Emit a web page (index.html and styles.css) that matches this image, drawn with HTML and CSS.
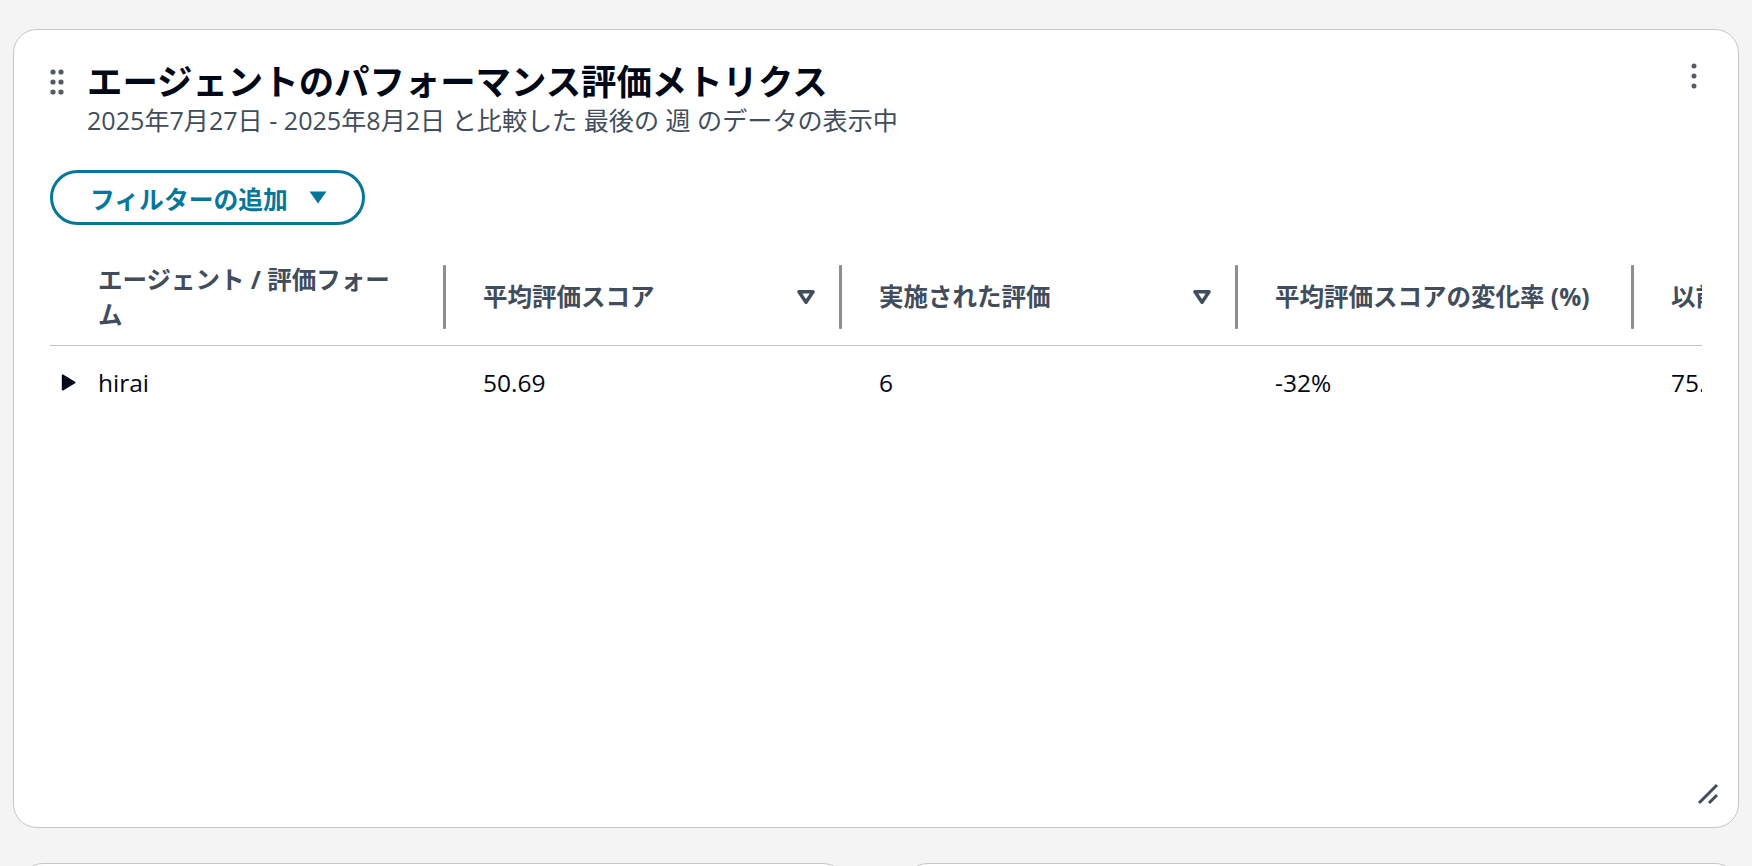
FILE: index.html
```html
<!DOCTYPE html>
<html lang="ja">
<head>
<meta charset="utf-8">
<title>エージェントのパフォーマンス評価メトリクス</title>
<link rel="stylesheet" href="styles.css">
</head>
<body>
<main class="board">
  <section class="card card-main">
    <header class="card-head">
      <svg class="drag" width="14" height="26" viewBox="0 0 14 26" aria-hidden="true">
        <circle cx="3" cy="3" r="2.6"/><circle cx="11" cy="3" r="2.6"/>
        <circle cx="3" cy="13" r="2.6"/><circle cx="11" cy="13" r="2.6"/>
        <circle cx="3" cy="23" r="2.6"/><circle cx="11" cy="23" r="2.6"/>
      </svg>
      <div class="titles">
        <h2 class="title">エージェントのパフォーマンス評価メトリクス</h2>
        <p class="subtitle">2025年7月27日 - 2025年8月2日 と比較した 最後の 週 のデータの表示中</p>
      </div>
      <svg class="kebab" width="6" height="26" viewBox="0 0 6 26" aria-hidden="true">
        <circle cx="3" cy="3" r="2.5"/><circle cx="3" cy="13" r="2.5"/><circle cx="3" cy="23" r="2.5"/>
      </svg>
    </header>

    <div class="toolbar">
      <button class="filter-btn" type="button">
        <span>フィルターの追加</span>
        <svg class="caret" width="18" height="13" viewBox="0 0 18 13" aria-hidden="true"><path d="M0.5 0.5h17L9 12.5z"/></svg>
      </button>
    </div>

    <div class="table-wrap">
      <div class="table">
        <div class="th th-first">
          <span class="th-label th-label-first">エージェント / 評価フォーム</span>
          <span class="divider"></span>
        </div>
        <div class="th">
          <span class="th-label">平均評価スコア</span>
          <svg class="sort" width="28" height="28" viewBox="0 0 16 16" aria-hidden="true"><path d="M4 5h8l-4 6z"/></svg>
          <span class="divider"></span>
        </div>
        <div class="th">
          <span class="th-label">実施された評価</span>
          <svg class="sort" width="28" height="28" viewBox="0 0 16 16" aria-hidden="true"><path d="M4 5h8l-4 6z"/></svg>
          <span class="divider"></span>
        </div>
        <div class="th">
          <span class="th-label">平均評価スコアの変化率 (%)</span>
          <span class="divider"></span>
        </div>
        <div class="th">
          <span class="th-label">以前の平均評価スコア</span>
          <span class="divider"></span>
        </div>

        <div class="td td-first">
          <svg class="expand" width="15" height="17" viewBox="0 0 15 17" aria-hidden="true"><path d="M0.8 1.3v14.4c0 .7.7 1.1 1.3.7l12-7.2c.5-.4.5-1 0-1.4l-12-7.2C1.5.2.8.6.8 1.3z"/></svg>
          <span>hirai</span>
        </div>
        <div class="td">50.69</div>
        <div class="td">6</div>
        <div class="td">-32%</div>
        <div class="td">75.00</div>
      </div>
    </div>

    <svg class="resize" width="22" height="22" viewBox="0 0 22 22" aria-hidden="true">
      <path d="M2 20L20 2M12 20l8-8"/>
    </svg>
  </section>

  <div class="row-bottom">
    <section class="card card-small"></section>
    <section class="card card-small"></section>
  </div>
</main>
</body>
</html>
```

FILE: styles.css
```css
* { box-sizing: border-box; }

html, body {
  margin: 0;
  padding: 0;
  background: #f4f4f4;
  overflow: hidden;
}

body {
  font-family: "Open Sans", "Noto Sans CJK JP", sans-serif;
  color: #000716;
}

.board {
  padding: 29px 13px 0 13px;
  display: flex;
  flex-direction: column;
  gap: 35px;
}

.card {
  background: #ffffff;
  border: 1px solid #c6c6cd;
  border-radius: 24px;
}

.card-main {
  position: relative;
  height: 799px;
  padding: 33px 36px 0 36px;
  display: flex;
  flex-direction: column;
}

.card-head {
  display: flex;
  align-items: flex-start;
}

.drag {
  fill: #545b64;
  margin-top: 6px;
  flex: none;
}

.titles {
  flex: 1;
  margin-left: 23px;
  margin-top: 1px;
}

.title {
  margin: 0;
  font-size: 35.4px;
  line-height: 34px;
  font-weight: 700;
  color: #000716;
}

.subtitle {
  margin: 8px 0 0 0;
  font-size: 25.1px;
  line-height: 28px;
  color: #414d5c;
}

.kebab {
  fill: #545b64;
  margin-right: 5px;
  flex: none;
}

.toolbar {
  margin-top: 36px;
  display: flex;
}

.filter-btn {
  height: 55px;
  border: 3px solid #06779a;
  border-radius: 28px;
  background: #ffffff;
  color: #06779a;
  font-family: "Open Sans", "Noto Sans CJK JP", sans-serif;
  font-size: 24.8px;
  font-weight: 700;
  padding: 0 35px 0 37px;
  display: flex;
  align-items: center;
  gap: 21px;
}

.caret {
  fill: #06779a;
}

.table-wrap {
  margin-top: 23px;
  overflow: hidden;
}

.table {
  display: grid;
  grid-template-columns: repeat(5, 396px);
  width: max-content;
}

.th {
  display: flex;
  align-items: center;
  padding: 13px 0 13px 37px;
  min-height: 98px;
  border-bottom: 1px solid #c6c6cd;
  color: #414d5c;
  font-size: 24.5px;
  line-height: 35px;
  font-weight: 700;
}

.th-first {
  padding-left: 48px;
}

.th-label {
  flex: 1;
}

.th-label-first {
  padding-right: 40px;
}

.sort {
  flex: none;
  fill: none;
  stroke: #414d5c;
  stroke-width: 2;
  stroke-linejoin: round;
  margin-right: 19px;
}

.divider {
  flex: none;
  width: 3px;
  height: 64px;
  background: #8c8c94;
  border-radius: 1px;
}

.td {
  display: flex;
  align-items: center;
  padding: 19px 0 16px 37px;
  font-size: 24.5px;
  line-height: 35px;
  color: #000716;
}

.td-first {
  padding-left: 11px;
  gap: 22px;
}

.expand {
  fill: #000716;
  flex: none;
}

.resize {
  position: absolute;
  right: 19px;
  bottom: 22px;
  fill: none;
  stroke: #414d5c;
  stroke-width: 3;
}

.row-bottom {
  display: grid;
  grid-template-columns: 828px 1fr;
  gap: 57px;
  padding-left: 6px;
}

.card-small {
  height: 300px;
}
```
